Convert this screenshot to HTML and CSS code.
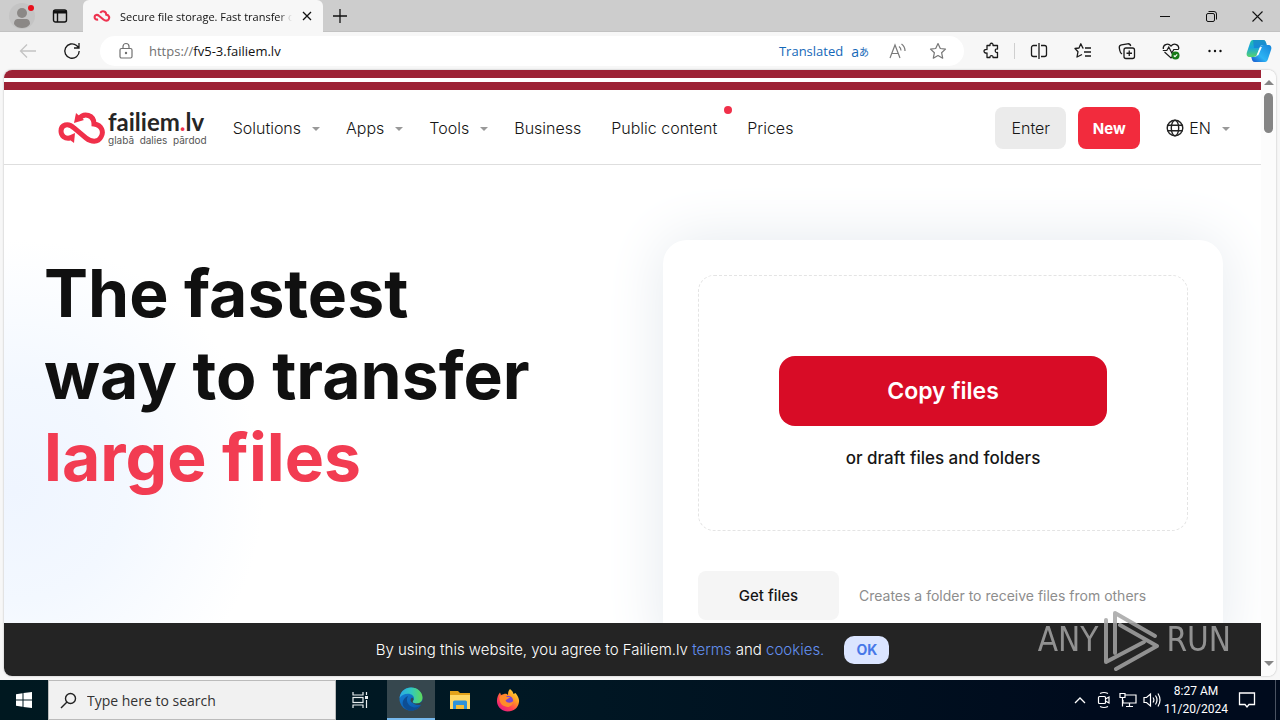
FILE: index.html
```html
<!DOCTYPE html>
<html lang="en">
<head>
<meta charset="utf-8">
<meta name="viewport" content="width=device-width, initial-scale=1">
<title>Secure file storage. Fast transfer of files</title>
<link rel="stylesheet" href="styles.css">
</head>
<body>
<div class="titlebar">
  <button class="tb-btn profile" aria-label="Profile">
    <svg width="28" height="28" viewBox="0 0 28 28"><circle cx="14" cy="14" r="13" fill="#c4c4c4"/><circle cx="14" cy="11" r="5" fill="#8b8886"/><path d="M6 22c0-4 2-5 4-5h8c2 0 4 1 4 5-2 3-5 4-8 4s-6-1-8-4z" fill="#8b8886"/><circle cx="23" cy="6" r="3" fill="#e8101c"/></svg>
  </button>
  <button class="tb-btn tabs-menu" aria-label="Tab actions">
    <svg width="16" height="16" viewBox="0 0 16 16" fill="none" stroke="#111" stroke-width="1.4"><rect x="1.5" y="2" width="13" height="12" rx="2"/><path d="M1.5 4h13" stroke-width="3"/><path d="M5.5 4v10"/></svg>
  </button>
  <div class="tab">
    <svg width="18" height="12" viewBox="0 0 50 34" fill="none" stroke="#ee3350" stroke-width="6"><path d="M20 8C26 0 37 4 37 13c8 1 10 8 7 13-3 6-10 5-15 1L17 17C11 11 4 14 4 20c0 5 4 8 10 7"/></svg>
    <span class="tab-title">Secure file storage. Fast transfer o</span>
    <button class="tab-close" aria-label="Close tab"><svg width="10" height="10" viewBox="0 0 10 10" stroke="#111" stroke-width="1.3"><path d="M1 1l8 8M9 1L1 9"/></svg></button>
  </div>
  <button class="tb-btn new-tab" aria-label="New tab"><svg width="14" height="14" viewBox="0 0 14 14" stroke="#111" stroke-width="1.3"><path d="M7 0v14M0 7h14"/></svg></button>
  <div class="window-controls">
    <button aria-label="Minimize"><svg width="10" height="10" viewBox="0 0 10 10" stroke="#111"><path d="M0 5.5h10"/></svg></button>
    <button aria-label="Restore"><svg width="11" height="11" viewBox="0 0 11 11" fill="none" stroke="#111"><rect x=".5" y="2.500" width="8" height="8" rx="1.500"/><path d="M2.500 .5H8a2.500 2.500 0 0 1 2.500 2.500v5.500"/></svg></button>
    <button aria-label="Close"><svg width="11" height="11" viewBox="0 0 11 11" stroke="#111" stroke-width="1.100"><path d="M.5 .5l10 10M10.500 .5l-10 10"/></svg></button>
  </div>
</div>

<div class="toolbar">
  <button class="tool" aria-label="Back"><svg width="18" height="16" viewBox="0 0 18 16" fill="none" stroke="#c4c4c4" stroke-width="1.300"><path d="M17 8H1.500M8 1.500L1.500 8 8 14.500"/></svg></button>
  <button class="tool" aria-label="Refresh"><svg width="18" height="18" viewBox="0 0 18 18" fill="none" stroke="#1b1b1b" stroke-width="1.300"><path d="M16.200 9A7.200 7.200 0 1 1 13.600 3.500L15.500 5.500M16 1v5h-5"/></svg></button>
  <div class="address">
    <svg width="16" height="18" viewBox="0 0 16 18" fill="none" stroke="#717171" stroke-width="1.200"><rect x="2" y="6.500" width="12" height="9.500" rx="1.500"/><path d="M5 6.500V4.500a3 3 0 0 1 6 0v2"/><circle cx="8" cy="11" r=".6" fill="#717171"/></svg>
    <label class="scheme" for="url">https://</label>
    <input id="url" class="url" type="text" value="fv5-3.failiem.lv">
    <span class="translated">Translated</span>
    <span class="lang-glyph"><span>a</span><span class="kana">あ</span></span>
    <button class="in-addr" aria-label="Read aloud"><svg width="18" height="16" viewBox="0 0 18 16" fill="none" stroke="#7a7a7a" stroke-width="1.200"><path d="M1 15L6 2l5 13M3 10.500h6.500M10 3.500q2 1.500 2 4M12.500 1q3.500 2.500 3.500 7"/></svg></button>
    <button class="in-addr" aria-label="Add to favorites"><svg width="18" height="18" viewBox="0 0 18 18" fill="none" stroke="#777" stroke-width="1.200" stroke-linejoin="round"><path d="M9 1.500l2.300 5 5.200.6-3.900 3.600 1.100 5.500L9 13.500l-4.700 2.700 1.100-5.500L1.500 7.100l5.200-.6z"/></svg></button>
  </div>
  <button class="tool" aria-label="Extensions"><svg width="18" height="18" viewBox="0 0 18 18" fill="none" stroke="#1b1b1b" stroke-width="1.300" stroke-linejoin="round"><path d="M4 3.500h3c-.7-3 3.700-3 3 0h4.500V7c-3-.8-3 4.200 0 3.500v5H10c.7-2.500-3.700-2.500-3 0H4v-4.500c-4 .5-4-4 0-3.500z"/></svg></button>
  <span class="divider"></span>
  <button class="tool" aria-label="Split screen"><svg width="18" height="18" viewBox="0 0 18 18" fill="none" stroke="#1b1b1b" stroke-width="1.300"><path d="M7 3.500H3.500a2 2 0 0 0-2 2v7a2 2 0 0 0 2 2H7M11 3.500h3.500a2 2 0 0 1 2 2v7a2 2 0 0 1-2 2H11M9 1v16"/></svg></button>
  <button class="tool" aria-label="Favorites"><svg width="18" height="18" viewBox="0 0 18 18" fill="none" stroke="#1b1b1b" stroke-width="1.300" stroke-linejoin="round"><path d="M9.500 6H8.800L6.800 1.800 5 6 1 6.500l3 3.200-1 5.300 5-2.500M11 6h6M10 10h7M11 14h6"/></svg></button>
  <button class="tool" aria-label="Collections"><svg width="18" height="18" viewBox="0 0 18 18" fill="none" stroke="#1b1b1b" stroke-width="1.300"><rect x="6" y="6" width="10.500" height="10.500" rx="2"/><path d="M11.250 8.500v5.500M8.500 11.250H14M4 12C2.500 11 2 10 1.800 8.500L1.300 6C1 4 2 3.200 3.500 2.900L9.500 1.800c2-.3 2.900.7 3.200 2.200"/></svg></button>
  <button class="tool" aria-label="Browser essentials"><svg width="18" height="18" viewBox="0 0 18 18" fill="none" stroke="#1b1b1b" stroke-width="1.200"><path d="M1.300 7C.6 3 5.700.3 9 4c3.300-3.700 8.400-1 7.700 3M2.500 10L9 16l2-2M.8 8.500h4l2-3.500 3 6 2-3.500h5"/><circle cx="13.500" cy="13.500" r="4" fill="#187b18" stroke="none"/><path d="M11.800 13.500l1.200 1.200 2.200-2.400" stroke="#fff"/></svg></button>
  <button class="tool" aria-label="Settings and more"><svg width="18" height="18" viewBox="0 0 18 18" fill="#111"><circle cx="3.500" cy="9" r="1.200"/><circle cx="9" cy="9" r="1.200"/><circle cx="14.500" cy="9" r="1.200"/></svg></button>
  <button class="tool copilot" aria-label="Copilot"><svg width="26" height="24" viewBox="0 0 26 24"><defs><linearGradient id="ca" x2="0" y2="1"><stop stop-color="#22c1a8"/><stop offset=".45" stop-color="#19a5dc"/><stop offset="1" stop-color="#57d46c"/></linearGradient><linearGradient id="cb" x1="1" x2="0" y2="1"><stop stop-color="#1584d9"/><stop offset=".6" stop-color="#2db4f4"/><stop offset="1" stop-color="#1551cb"/></linearGradient></defs><path d="M7 1h10c2.500 0 3 2 3.700 5h-4c-2 0-2.700 1-3.200 3l-2 6c-.8 2-1.800 3-4 3H4c-3 0-4-2-3-5L4 4c.6-2 1.500-3 3-3z" fill="url(#ca)"/><path d="M7 1h10c2.500 0 3 2 3.700 5h-4c-2 0-2.700 1-3.200 3H8z" fill="#1679d6" opacity=".65"/><path d="M19 23H9c-2.500 0-3-2-3.700-5h3c2 0 2.700-1 3.200-3l2-6c.8-2 1.800-3 4-3H22c3 0 4 2 3 5l-3 9c-.6 2-1.500 3-3 3z" fill="url(#cb)"/><path d="M13.300 9.500c.3-1.200 1-1.500 2.600-1.500l-3 7c-.4 1.200-1 1.500-2.400 1.500z" fill="#fff"/></svg></button>
</div>

<div class="frame">
  <div class="viewport">
    <div class="stripes"></div>
    <header class="site-header">
      <a class="logo" href="#">
        <svg width="50" height="34" viewBox="0 0 50 34" fill="none" stroke="#f0304a" stroke-width="5"><path d="M22 8C27 1 37 4 37 13c8 1 10 8 7 13-3 6-10 5-15 1L17 17C11 11 4 14 4 20c0 5 4 8 9 7"/><path d="M18 22l-1 10-8-6z" fill="#f0304a" stroke="none"/><path d="M19 2l8 7-10 3z" fill="#f0304a" stroke="none"/></svg>
        <span class="wordmark"><span class="brand">failiem<span class="dot">.</span>lv</span><span class="tagline">glabā&nbsp; dalies&nbsp; pārdod</span></span>
      </a>
      <nav class="nav">
        <a class="more" href="#">Solutions</a>
        <a class="more" href="#">Apps</a>
        <a class="more" href="#">Tools</a>
        <a href="#">Business</a>
        <a class="flagged" href="#">Public content</a>
        <a href="#">Prices</a>
      </nav>
      <button class="btn enter">Enter</button>
      <button class="btn new">New</button>
      <button class="language"><svg width="18" height="18" viewBox="0 0 18 18" fill="none" stroke="#222" stroke-width="1.400"><circle cx="9" cy="9" r="7.800"/><ellipse cx="9" cy="9" rx="3.700" ry="7.800"/><path d="M1.500 6.300h15M1.500 11.700h15"/></svg><span class="more">EN</span></button>
    </header>
    <main class="hero">
      <h1>The fastest<br>way to transfer<br><span class="accent">large files</span></h1>
      <section class="card">
        <div class="dropzone">
          <button class="copy">Copy files</button>
          <p>or draft files and folders</p>
        </div>
        <div class="receive"><button class="get">Get files</button><span>Creates a folder to receive files from others</span></div>
      </section>
    </main>
    <div class="cookie-bar">
      <p>By using this website, you agree to Failiem.lv <a href="#">terms</a> and <a href="#">cookies.</a></p>
      <button class="ok">OK</button>
    </div>
  </div>
  <div class="scrollbar"><span class="arrow up"></span><span class="thumb"></span><span class="arrow down"></span></div>
  <div class="watermark"><span>ANY</span><svg width="58" height="64" viewBox="0 0 58 64" fill="none" stroke="currentColor" stroke-width="4" stroke-linejoin="round" stroke-linecap="round"><path d="M12 45V5l40 23"/><path d="M3 12v42l38-20"/><path d="M17 17l37 21-41 23"/></svg><span>RUN</span></div>
</div>

<div class="taskbar">
  <button class="task start" aria-label="Start"><svg width="16" height="16" viewBox="0 0 16 16" fill="#fff"><path d="M0 2.200L6.500 1.300v6.200H0zM7.500 1.100L16 0v7.500H7.500zM0 8.500h6.500v6.200L0 13.800zM7.500 8.500H16V16l-8.500-1.100z"/></svg></button>
  <label class="search"><svg width="17" height="17" viewBox="0 0 17 17" fill="none" stroke="#222" stroke-width="1.400"><circle cx="10.500" cy="6.500" r="5"/><path d="M7 10L1 16"/></svg><input type="text" placeholder="Type here to search" aria-label="Type here to search"></label>
  <button class="task" aria-label="Task view"><svg width="18" height="18" viewBox="0 0 18 18" fill="none" stroke="#e8eef0" stroke-width="1.200"><path d="M2 1v3h10V1M2 17v-3h10v3"/><rect x="2" y="6.500" width="10" height="5"/><path d="M15.500 1v3M15.500 9v8"/><path d="M14 6.500h3" stroke-width="3"/></svg></button>
  <button class="task active" aria-label="Microsoft Edge"><svg width="24" height="24" viewBox="0 0 24 24"><defs><linearGradient id="ea" x2="1"><stop stop-color="#2aa9e6"/><stop offset=".5" stop-color="#31c8c0"/><stop offset="1" stop-color="#5fdb58"/></linearGradient><linearGradient id="eb" x2=".6" y2="1"><stop stop-color="#1683d9"/><stop offset="1" stop-color="#0b5cae"/></linearGradient></defs><circle cx="12" cy="12" r="11.500" fill="url(#eb)"/><path d="M.6 11C1.500 4 6.500.5 12 .5c7 0 11.500 5 11.500 10 0 4-3 6-6 6-2.500 0-4-.8-4-1.800 0-.8 1.500-1.200 1.500-3.200 0-2.500-2.500-4.700-6-4.700-4 0-7 2-8.400 4.200z" fill="url(#ea)"/><path d="M9 9c-3 5 .5 10.500 6 11.500 3 .3 5.500-.8 7-3-3 6-10 7.500-15 4.500-6-4-3-11 2-13z" fill="#0d4d93"/><path d="M23.500 16.500c-2 2.200-7 2.200-9.500-.5-3-1-3-4-1-5.500 1 .3 2 2 1 3.200-.8 1 0 2.800 3.500 2.800 3 0 5-1 6-3z" fill="#36474e"/></svg></button>
  <button class="task" aria-label="File Explorer"><svg width="22" height="20" viewBox="0 0 22 20"><path d="M1 1h8l2 2h10v4H1z" fill="#e3a21a"/><path d="M1 5h20v14H1z" fill="#ffd765"/><path d="M4 19v-7q0-1.500 1.500-1.500h11q1.500 0 1.500 1.500v7h-3v-4H7v4z" fill="#2e93d9"/><path d="M7 15h8v4H7z" fill="#f5bd36"/></svg></button>
  <button class="task" aria-label="Firefox"><svg width="24" height="24" viewBox="0 0 24 24"><defs><linearGradient id="fa" x1="1" x2=".2" y2="1"><stop stop-color="#fff044"/><stop offset=".4" stop-color="#ff9a22"/><stop offset=".7" stop-color="#ff4052"/><stop offset="1" stop-color="#e31887"/></linearGradient></defs><path d="M14 1c2 1.500 3 3 3.500 5l2-1C22 8 23.500 11 23 14c-.8 6-5.500 9.500-11 9.500S1.500 19.500 1 14C.7 10 2 7 4 4.500L5 7l3-1c2-.5 3 .2 4 1 0-3 .5-4.500 2-6z" fill="url(#fa)"/><circle cx="12" cy="13" r="5.200" fill="#7945d1"/><path d="M3.500 9c3-3 6-2 7.500 0h3c-1 2-3 1.500-4.500 3.500 1.500 3 6 3 8 0 0 5-4.500 7.500-8 6C5.500 17.500 3 14 3.500 9z" fill="#ff8b2a"/></svg></button>
  <div class="tray">
    <button aria-label="Show hidden icons"><svg width="12" height="8" viewBox="0 0 12 8" fill="none" stroke="#fff" stroke-width="1.300"><path d="M1 7l5-5 5 5"/></svg></button>
    <button aria-label="Camera"><svg width="14" height="18" viewBox="0 0 14 18" fill="none" stroke="#fff" stroke-width="1.200"><rect x="1.500" y="5.500" width="7" height="7" rx="1"/><path d="M8.500 8l3.500-2v6l-3.500-2M3 2.500q4-2 8 0M3 15.500q4 2 8 0"/></svg></button>
    <button aria-label="Network"><svg width="18" height="16" viewBox="0 0 18 16" fill="none" stroke="#fff" stroke-width="1.200"><path d="M6 3h11v8H4V8M10.500 11v3M7 14.500h7M1 1.500h5v4H1zM3.500 5.500v9"/></svg></button>
    <button aria-label="Volume"><svg width="18" height="16" viewBox="0 0 18 16" fill="none" stroke="#fff" stroke-width="1.200"><path d="M1 5.500h2.500L7.500 2v12l-4-3.500H1zM10 5.500q1.800 2.500 0 5M12.500 3.500q3 4.500 0 9M15 1.500q4 6.500 0 13"/></svg></button>
    <div class="clock"><time>8:27 AM</time><time>11/20/2024</time></div>
    <button class="notify" aria-label="Notifications"><svg width="18" height="18" viewBox="0 0 18 18" fill="none" stroke="#fff" stroke-width="1.300"><path d="M1.500 2h15v11.500H11l-2 2.500-2-2.500H1.500z"/></svg></button>
    <span class="peek"></span>
  </div>
</div>
</body>
</html>
```
FILE: styles.css
```css
* { box-sizing: border-box; }
html, body { height: 100%; }
body {
  margin: 0;
  display: flex;
  flex-direction: column;
  overflow: hidden;
  background: #f7f7f7;
  font-family: "Open Sans", "Noto Sans", sans-serif;
  font-size: 12px;
  color: #111;
}
button, input { font: inherit; color: inherit; border: 0; padding: 0; background: none; }
button { display: flex; align-items: center; justify-content: center; flex: none; }
svg { display: block; flex: none; }
a { color: inherit; text-decoration: none; }
p, h1 { margin: 0; }

/* Browser window */
.titlebar { display: flex; flex: none; height: 32px; background: #cdcdcd; border-bottom: 1px solid #c2c2c2; }
.tb-btn { height: 32px; }
.profile { width: 44px; }
.tabs-menu { width: 32px; margin-right: 7px; }
.tab {
  display: flex; align-items: center; gap: 9px;
  width: 240px; height: 32px; padding: 0 10px;
  background: #f7f7f7; border-radius: 6px 6px 0 0;
}
.tab-title {
  flex: 1; min-width: 0; overflow: hidden; white-space: nowrap; font-size: 11px;
  mask-image: linear-gradient(to right, #000 92%, transparent);
}
.tab-close { width: 12px; height: 16px; }
.new-tab { width: 34px; }
.window-controls { display: flex; margin-left: auto; }
.window-controls button { width: 46px; height: 32px; }
.toolbar { display: flex; flex: none; align-items: center; height: 38px; padding-left: 6px; }
.tool { width: 44px; height: 32px; }
.copilot { width: 43px; }
.address {
  display: flex; flex: 1; align-items: center; min-width: 0;
  height: 30px; margin: 0 6px; padding: 0 6px 0 18px;
  border-radius: 15px; background: #fff; font-size: 13px;
}
.scheme { margin-left: 15px; color: #717171; }
.url { flex: 1; min-width: 0; outline: 0; }
.translated { color: #1468b8; }
.lang-glyph { display: flex; align-items: center; margin: 0 9px 0 8px; color: #1468b8; font-size: 14px; }
.kana { font-family: "Noto Sans CJK JP", sans-serif; font-size: 10px; }
.in-addr { width: 40px; height: 28px; }
.divider { width: 1px; height: 16px; margin-right: 2px; background: #cfcfcf; }

/* Page frame */
.frame {
  position: relative; display: flex; flex: 1; min-height: 0;
  margin: 0 4px 4px; border-radius: 8px; overflow: hidden;
  background: #fff; box-shadow: 0 0 2px #aaa;
}
.viewport {
  position: relative; flex: 1; min-width: 0; overflow: hidden;
  background: radial-gradient(circle at 10px 420px, #eff5ff 0, #f3f8ff 110px, #fff 250px) #fff;
  font-family: Inter, sans-serif; font-size: 16px; color: #161616;
}
.stripes { height: 20px; background: linear-gradient(#9d2235 8px, #fff 8px, #fff 12px, #9d2235 12px); }
.site-header {
  display: flex; align-items: center; height: 75px; padding: 2px 31px 0 53px;
  background: #fff; border-bottom: 1px solid #dedede; font-weight: 300;
}
.logo { display: flex; align-items: center; gap: 1px; margin-right: 26px; }
.wordmark { display: flex; flex-direction: column; }
.brand { font: 700 24px/24px Lato, sans-serif; color: #262626; }
.dot { color: #f0304a; }
.tagline { font-size: 10px; line-height: 12px; font-weight: 400; color: #555; white-space: nowrap; }
.nav { display: flex; gap: 30px; white-space: nowrap; }
.more::after {
  content: ""; display: inline-block; margin-left: 11px; vertical-align: 3px;
  border: 4px solid transparent; border-top-color: #999; border-bottom: 0;
}
.nav .more { margin-right: -4px; }
.flagged { position: relative; }
.flagged::after {
  content: ""; position: absolute; right: -15px; top: -12px;
  width: 8px; height: 8px; border-radius: 50%; background: #f0304a;
}
.btn { height: 42px; border-radius: 8px; }
.enter { width: 71px; margin-left: auto; background: #ebebeb; }
.new { width: 62px; margin: 0 26px 0 12px; background: #f22b3d; color: #fff; font-size: 15px; font-weight: 700; }
.language { gap: 5px; }
.hero {
  display: grid; grid-template-columns: 1fr 560px; align-items: start;
  padding: 75px 38px 60px 40px;
}
h1 { padding-top: 12px; font-size: 66px; line-height: 82px; font-weight: 700; color: #101010; white-space: nowrap; }
.accent { color: #f23c52; }
.card { padding: 35px; border-radius: 24px; background: #fff; box-shadow: 0 0 60px #e4e9ee; }
.dropzone {
  display: flex; flex-direction: column; align-items: center; gap: 20px;
  height: 256px; padding: 80px; border: 1px dashed #e4e4e4; border-radius: 16px;
  font-weight: 500;
}
.dropzone p { line-height: 24px; font-size: 17px; white-space: nowrap; }
.copy { width: 100%; height: 70px; border-radius: 16px; background: #d80c26; color: #fff; font-size: 23px; font-weight: 600; }
.receive { display: flex; align-items: center; gap: 20px; margin-top: 40px; font-size: 14px; color: #8d8d8d; }
.get { width: 141px; height: 49px; border-radius: 8px; background: #f5f5f5; color: #161616; font-size: 15px; font-weight: 500; }
.cookie-bar {
  position: absolute; inset: auto 0 0; display: flex; align-items: center; justify-content: center;
  gap: 20px; height: 53px; background: #242424; color: #fff; font-size: 15px; font-weight: 300;
}
.cookie-bar a { color: #6390f0; }
.ok { width: 45px; height: 28px; border-radius: 10px; background: #dbe5ff; color: #4778e8; font-size: 14px; font-weight: 700; }
.scrollbar { display: flex; flex: none; flex-direction: column; align-items: center; width: 15px; padding: 10px 0; background: #fcfcfc; }
.arrow { border: 5px solid transparent; }
.up { border-top: 0; border-bottom-color: #858585; }
.down { margin-top: auto; border-bottom: 0; border-top-color: #858585; }
.thumb { width: 9px; height: 40px; margin-top: 8px; border-radius: 5px; background: #858585; }
.watermark {
  position: absolute; right: 45px; bottom: 4px; display: flex; align-items: center; gap: 5px;
  color: #a5a5a5; opacity: .85; pointer-events: none;
  font: 33px/40px "Liberation Sans Narrow", "DejaVu Sans Condensed", sans-serif;
}

/* Desktop taskbar */
.taskbar { display: flex; flex: none; height: 40px; background: linear-gradient(to right, #001820, #001824 40%, #000b1d 85%); }
.task { width: 48px; height: 40px; }
.search {
  display: flex; align-items: center; gap: 10px; width: 288px; padding: 0 12px 0 11px;
  background: #f1f1f1; border: 1px solid #bbb;
}
.search input { flex: 1; min-width: 0; font-size: 14px; outline: 0; }
.search input::placeholder { color: #333; opacity: 1; }
.search + .task { margin-right: 3px; }
.active { margin-right: 1px; background: #36474e; border-bottom: 2px solid #76b9ed; }
.tray { display: flex; align-items: center; margin-left: auto; color: #fff; }
.tray button { width: 24px; height: 40px; }
.clock { display: flex; flex-direction: column; align-items: center; width: 58px; margin-left: 3px; font-family: Roboto, sans-serif; line-height: 18px; }
.tray .notify { width: 44px; margin-right: 3px; }
.peek { width: 5px; height: 40px; margin-left: 3px; border-left: 1px solid #4a5362; }
```
